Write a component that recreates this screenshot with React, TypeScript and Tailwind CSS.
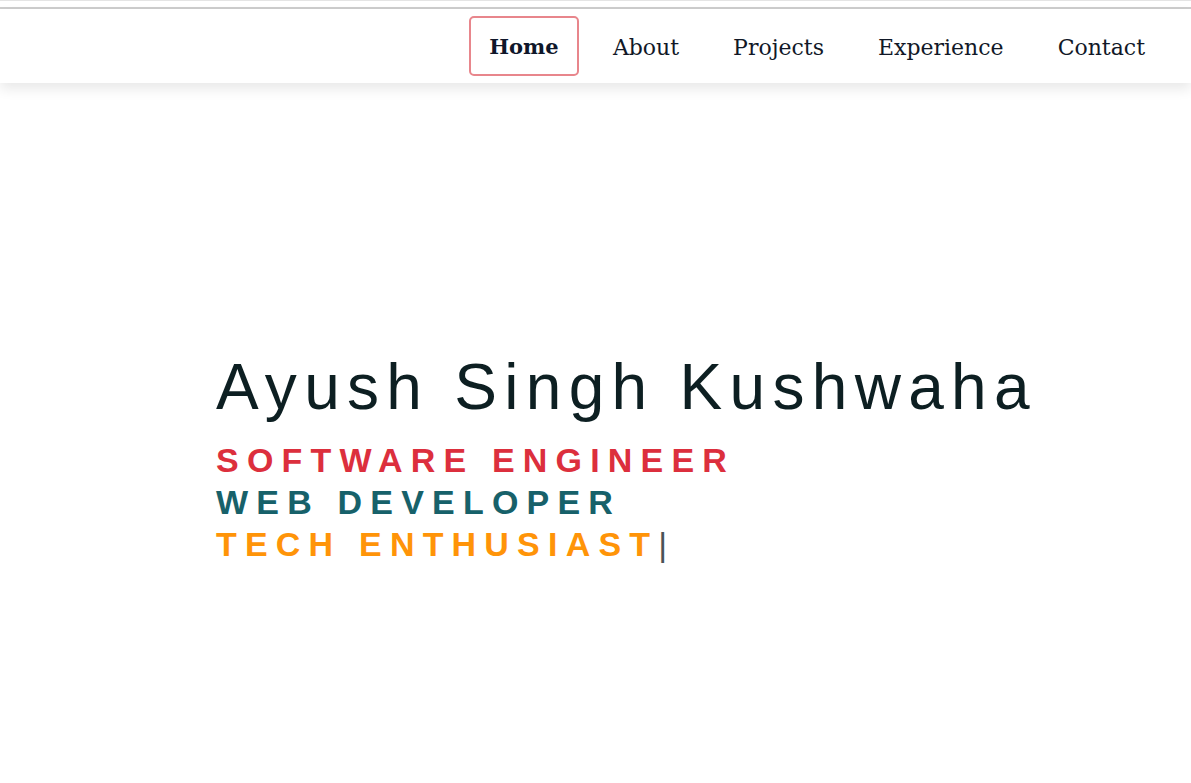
import React from "react";

export default function App() {
  const nav = ["Home", "About", "Projects", "Experience", "Contact"];
  return (
    <div className="min-h-[783px] w-full bg-white" style={{ fontFamily: "'Liberation Sans', Arial, sans-serif" }}>
      <div className="h-px bg-[#e4e4e4]" />
      <div className="h-[6px] bg-white" />
      <div className="h-[2px] bg-[#cdcdcd]" />
      <header className="relative z-10 flex h-[74px] items-center justify-end bg-white pr-[26px] shadow-[0_6px_12px_rgba(0,0,0,0.09)]">
        <nav className="flex items-center gap-[14px]" style={{ fontFamily: "'DejaVu Serif', serif" }}>
          {nav.map((n, i) => (
            <a
              key={n}
              className={
                i === 0
                  ? "flex h-[60px] w-[110px] items-center justify-center rounded-[5px] border-2 border-[#e8868c] pt-[2px] text-[21px] font-bold text-[#0f172a]"
                  : "flex h-[60px] items-center px-[20px] pt-[2px] text-[22px] text-[#111827]"
              }
            >
              {n}
            </a>
          ))}
        </nav>
      </header>
      <main className="pl-[216px] pt-[266px]">
        <h1 className="text-[64px] leading-[76px] tracking-[7.3px] text-[#0d1f22]">Ayush Singh Kushwaha</h1>
        <div className="mt-[14px] text-[34px] font-bold leading-[42px] tracking-[8.2px]">
          <div className="text-[#dc2f3d]">SOFTWARE ENGINEER</div>
          <div className="text-[#17616a]">WEB DEVELOPER</div>
          <div className="text-[#ff9408]">
            TECH ENTHUSIAST<span className="font-normal tracking-normal text-[#4a5356]">|</span>
          </div>
        </div>
      </main>
    </div>
  );
}
